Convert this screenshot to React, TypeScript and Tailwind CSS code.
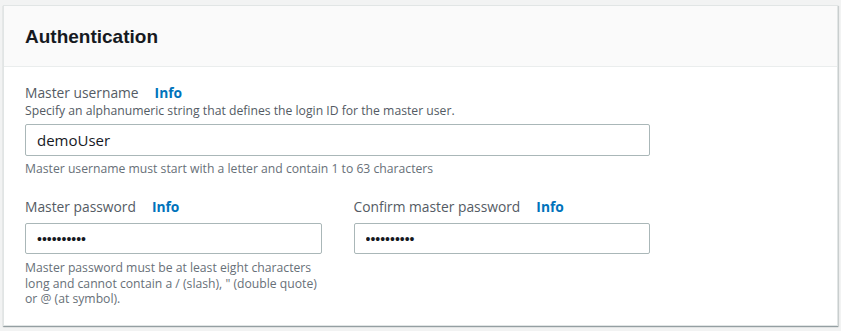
import React from 'react';

const Info = () => (
  <a href="#" className="ml-[16px] font-bold text-[#0073bb]">Info</a>
);

const Field = ({ label, type = 'text', value }: { label: string; type?: string; value: string }) => (
  <div>
    <div className="text-[13.8px] leading-[20px] text-[#545b64]">
      {label}
      <Info />
    </div>
    <input
      type={type}
      value={value}
      readOnly
      className="mt-[6px] block h-[31px] w-full rounded-[2px] border border-[#aab7b8] bg-white px-[11px] font-['Liberation_Sans',Arial,sans-serif] text-[14px] text-[#16191f] outline-none"
    />
  </div>
);

export default function App() {
  return (
    <div className="h-[331px] w-[841px] bg-[#f2f3f3] pl-[3px] pt-[5px] font-['Open_Sans',Arial,sans-serif]">
      <div className="w-[835px] border border-[#e1e5e5] bg-white shadow-[0_1px_1px_0_rgba(0,28,36,0.3),1px_1px_1px_0_rgba(0,28,36,0.12)]">
        <div className="flex h-[61px] items-center border-b border-[#eaeded] bg-[#fafafa] px-[21px] pt-[2px]">
          <h2 className="font-['Liberation_Sans',Arial,sans-serif] text-[19px] font-bold text-[#16191f]">Authentication</h2>
        </div>

        <div className="px-[21px] pb-[18px] pt-[16px]">
          <div className="w-[625px]">
            <div className="text-[13.8px] leading-[20px] text-[#545b64]">
              Master username
              <Info />
            </div>
            <div className="text-[12.2px] leading-[16px] text-[#545b64]">
              Specify an alphanumeric string that defines the login ID for the master user.
            </div>
            <input
              type="text"
              value="demoUser"
              readOnly
              className="mt-[5px] block h-[32px] w-full rounded-[2px] border border-[#aab7b8] bg-white px-[11px] text-[15px] text-[#16191f] outline-none"
            />
            <div className="mt-[5px] text-[12.2px] leading-[16px] text-[#687078]">
              Master username must start with a letter and contain 1 to 63 characters
            </div>

            <div className="mt-[20px] grid grid-cols-2 gap-[32px]">
              <div>
                <Field label="Master password" type="password" value="demoPass12" />
                <div className="mt-[6px] text-[12.2px] leading-[15.5px] text-[#687078]">
                  <span className="block">Master password must be at least eight characters</span>
                  <span className="block">long and cannot contain a / (slash), " (double quote)</span>
                  <span className="block">or @ (at symbol).</span>
                </div>
              </div>
              <Field label="Confirm master password" type="password" value="demoPass12" />
            </div>
          </div>
        </div>
      </div>
    </div>
  );
}
